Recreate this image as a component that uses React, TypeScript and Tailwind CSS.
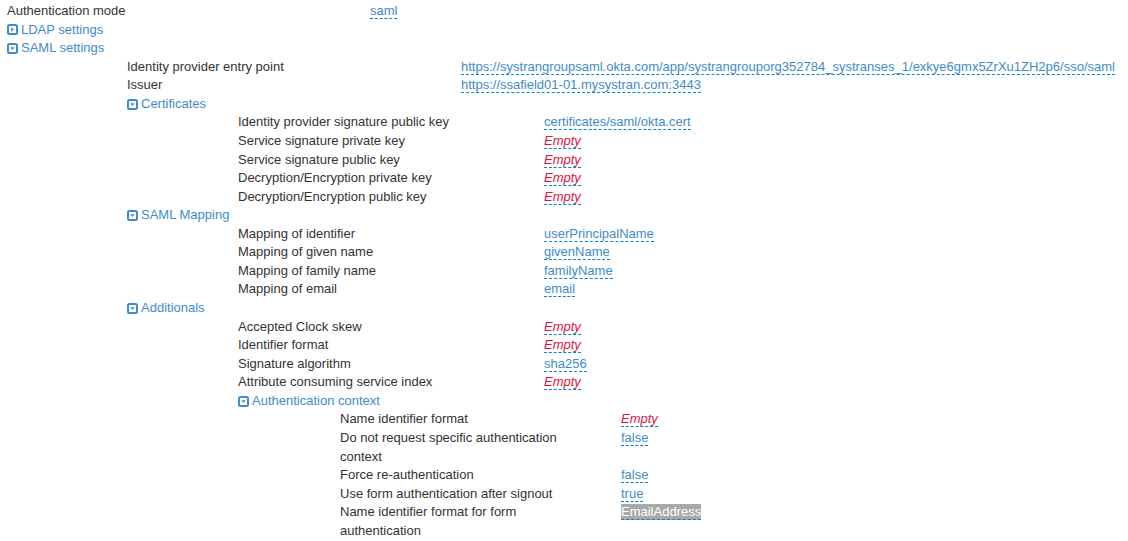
type Item =
  | { kind: "field"; label: string; value?: string; highlight?: boolean }
  | { kind: "section"; title: string; open: boolean; children?: Item[] };

const levels = [
  { indent: "pl-[7px]", label: "w-[363px]" },
  { indent: "pl-[120px]", label: "w-[334px]" },
  { indent: "pl-[111px]", label: "w-[306px]" },
  { indent: "pl-[102px]", label: "w-[281px] pr-[28px]" },
];

const tree: Item[] = [
  { kind: "field", label: "Authentication mode", value: "saml" },
  { kind: "section", title: "LDAP settings", open: false },
  {
    kind: "section",
    title: "SAML settings",
    open: true,
    children: [
      {
        kind: "field",
        label: "Identity provider entry point",
        value: "https://systrangroupsaml.okta.com/app/systrangrouporg352784_systranses_1/exkye6gmx5ZrXu1ZH2p6/sso/saml",
      },
      { kind: "field", label: "Issuer", value: "https://ssafield01-01.mysystran.com:3443" },
      {
        kind: "section",
        title: "Certificates",
        open: true,
        children: [
          { kind: "field", label: "Identity provider signature public key", value: "certificates/saml/okta.cert" },
          { kind: "field", label: "Service signature private key" },
          { kind: "field", label: "Service signature public key" },
          { kind: "field", label: "Decryption/Encryption private key" },
          { kind: "field", label: "Decryption/Encryption public key" },
        ],
      },
      {
        kind: "section",
        title: "SAML Mapping",
        open: true,
        children: [
          { kind: "field", label: "Mapping of identifier", value: "userPrincipalName" },
          { kind: "field", label: "Mapping of given name", value: "givenName" },
          { kind: "field", label: "Mapping of family name", value: "familyName" },
          { kind: "field", label: "Mapping of email", value: "email" },
        ],
      },
      {
        kind: "section",
        title: "Additionals",
        open: true,
        children: [
          { kind: "field", label: "Accepted Clock skew" },
          { kind: "field", label: "Identifier format" },
          { kind: "field", label: "Signature algorithm", value: "sha256" },
          { kind: "field", label: "Attribute consuming service index" },
          {
            kind: "section",
            title: "Authentication context",
            open: true,
            children: [
              { kind: "field", label: "Name identifier format" },
              { kind: "field", label: "Do not request specific authentication context", value: "false" },
              { kind: "field", label: "Force re-authentication", value: "false" },
              { kind: "field", label: "Use form authentication after signout", value: "true" },
              { kind: "field", label: "Name identifier format for form authentication", value: "EmailAddress", highlight: true },
            ],
          },
        ],
      },
    ],
  },
];

// caret-square-o style toggle
const ToggleIcon = ({ open }: { open: boolean }) => (
  <svg width="11" height="11" viewBox="0 0 11 11" className="shrink-0">
    <rect x="1" y="1" width="9" height="9" rx="1.5" fill="none" stroke="currentColor" strokeWidth="2" />
    {open ? (
      <path d="M3.2 4.2 H7.8 L5.5 7 Z" fill="currentColor" />
    ) : (
      <path d="M4.2 3.2 V7.8 L7 5.5 Z" fill="currentColor" />
    )}
  </svg>
);

const Editable = ({ value, highlight }: { value?: string; highlight?: boolean }) => {
  if (!value) {
    return <span className="border-b border-dashed border-[#0088cc] italic text-[#dd1144]">Empty</span>;
  }
  if (highlight) {
    return <span className="border-b border-dashed border-[#0088cc] bg-[#a9a9a9] text-white">{value}</span>;
  }
  return <span className="border-b border-dashed border-[#0088cc] text-[#428bca]">{value}</span>;
};

const Block = ({ items, depth }: { items: Item[]; depth: number }) => {
  const lvl = levels[depth];
  return (
    <div className={lvl.indent}>
      {items.map((item, i) =>
        item.kind === "field" ? (
          <div className="flex" key={i}>
            <div className={`${lvl.label} shrink-0 text-[#333]`}>{item.label}</div>
            <div className="whitespace-nowrap">
              <Editable value={item.value} highlight={item.highlight} />
            </div>
          </div>
        ) : (
          <div key={i}>
            <div className="flex items-center gap-[3px] text-[#428bca]">
              <ToggleIcon open={item.open} />
              <span>{item.title}</span>
            </div>
            {item.open && item.children && <Block items={item.children} depth={depth + 1} />}
          </div>
        )
      )}
    </div>
  );
};

export default function App() {
  return (
    <div className="min-h-[541px] bg-white pt-[2px] font-['Liberation_Sans',Arial,sans-serif] text-[13px] leading-[18.57px]">
      <Block items={tree} depth={0} />
    </div>
  );
}
